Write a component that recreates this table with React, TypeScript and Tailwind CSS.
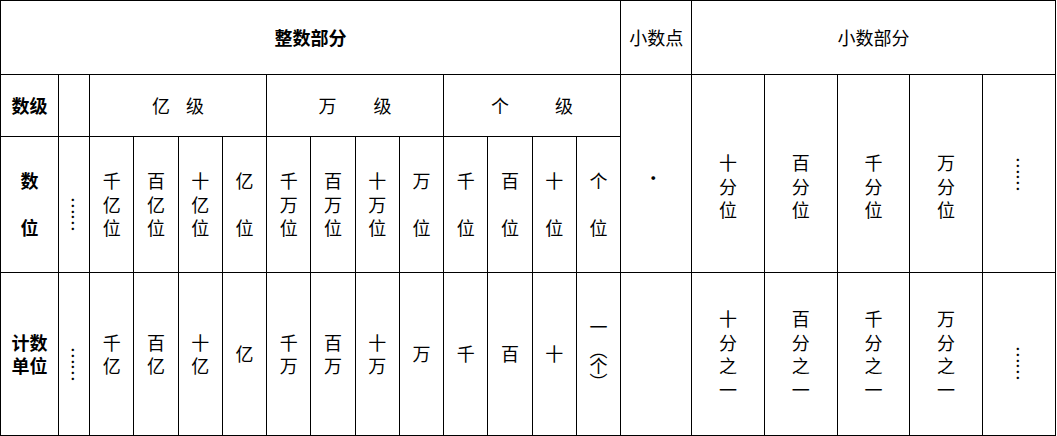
import React from 'react';

// place-value chart: 整数部分 / 小数点 / 小数部分
const cell = 'border-[1.5px] border-black text-center align-middle p-0';

const Stack: React.FC<{ chars: string[]; className?: string }> = ({ chars, className = '' }) => (
  <div className={`flex flex-col items-center leading-[23.5px] ${className}`}>
    {chars.map((c, i) => (
      <span key={i} className="h-[23.5px]">
        {c}
      </span>
    ))}
  </div>
);

const Dots: React.FC<{ className?: string }> = ({ className = '' }) => (
  <div className={`flex justify-center ${className}`}>
    <span className="[writing-mode:vertical-rl] leading-none tracking-[-1px]">……</span>
  </div>
);

const placeCols: string[][] = [
  ['千', '亿', '位'],
  ['百', '亿', '位'],
  ['十', '亿', '位'],
  ['亿', '', '位'],
  ['千', '万', '位'],
  ['百', '万', '位'],
  ['十', '万', '位'],
  ['万', '', '位'],
  ['千', '', '位'],
  ['百', '', '位'],
  ['十', '', '位'],
  ['个', '', '位'],
];

const unitCols: string[][] = [
  ['千', '亿'],
  ['百', '亿'],
  ['十', '亿'],
  ['亿'],
  ['千', '万'],
  ['百', '万'],
  ['十', '万'],
  ['万'],
  ['千'],
  ['百'],
  ['十'],
];

const decimalPlaces = ['十', '百', '千', '万'];

export default function App() {
  return (
    <div className="w-[1057px] h-[436px] bg-white overflow-hidden">
      <table className="table-fixed border-collapse w-[1055px] text-[18px] text-black font-['Noto_Sans_CJK_SC',sans-serif]">
        <colgroup>
          <col className="w-[58px]" />
          <col className="w-[31px]" />
          {placeCols.map((_, i) => (
            <col key={i} className="w-[44.25px]" />
          ))}
          <col className="w-[71px]" />
          {[0, 1, 2, 3, 4].map((i) => (
            <col key={i} className="w-[72.7px]" />
          ))}
        </colgroup>
        <tbody>
          <tr className="h-[74px]">
            <td colSpan={14} className={`${cell} font-bold`}>
              整数部分
            </td>
            <td className={cell}>小数点</td>
            <td colSpan={5} className={cell}>
              小数部分
            </td>
          </tr>

          <tr className="h-[62px]">
            <td className={`${cell} font-bold`}>数级</td>
            <td className={cell}></td>
            <td colSpan={4} className={cell}>
              <div className="flex justify-center gap-[16px]">
                <span>亿</span>
                <span>级</span>
              </div>
            </td>
            <td colSpan={4} className={cell}>
              <div className="flex justify-center gap-[37px]">
                <span>万</span>
                <span>级</span>
              </div>
            </td>
            <td colSpan={4} className={cell}>
              <div className="flex justify-center gap-[46px]">
                <span>个</span>
                <span>级</span>
              </div>
            </td>
            <td rowSpan={2} className={cell}>
              <span className="pr-[6px] pt-[8px] inline-block">·</span>
            </td>
            {decimalPlaces.map((d) => (
              <td key={d} rowSpan={2} className={cell}>
                <Stack chars={[d, '分', '位']} className="pt-[26px]" />
              </td>
            ))}
            <td rowSpan={2} className={cell}>
              <Dots />
            </td>
          </tr>

          <tr className="h-[136px]">
            <td className={`${cell} font-bold`}>
              <Stack chars={['数', '', '位']} />
            </td>
            <td className={cell}>
              <Dots className="pt-[18px]" />
            </td>
            {placeCols.map((chars, i) => (
              <td key={i} className={cell}>
                <Stack chars={chars} />
              </td>
            ))}
          </tr>

          <tr className="h-[163px]">
            <td className={`${cell} font-bold`}>
              <Stack chars={['计数', '单位']} />
            </td>
            <td className={cell}>
              <Dots className="pt-[20px]" />
            </td>
            {unitCols.map((chars, i) => (
              <td key={i} className={cell}>
                <Stack chars={chars} />
              </td>
            ))}
            <td className={cell}>
              <div className="flex flex-col items-center pb-[4px]">
                <span className="leading-[23.5px]">一</span>
                <span className="[writing-mode:vertical-rl] leading-none mt-[2px] tracking-[-2px]">（个）</span>
              </div>
            </td>
            <td className={cell}></td>
            {decimalPlaces.map((d) => (
              <td key={d} className={cell}>
                <Stack chars={[d, '分', '之', '一']} />
              </td>
            ))}
            <td className={cell}>
              <Dots className="pt-[18px]" />
            </td>
          </tr>
        </tbody>
      </table>
    </div>
  );
}
